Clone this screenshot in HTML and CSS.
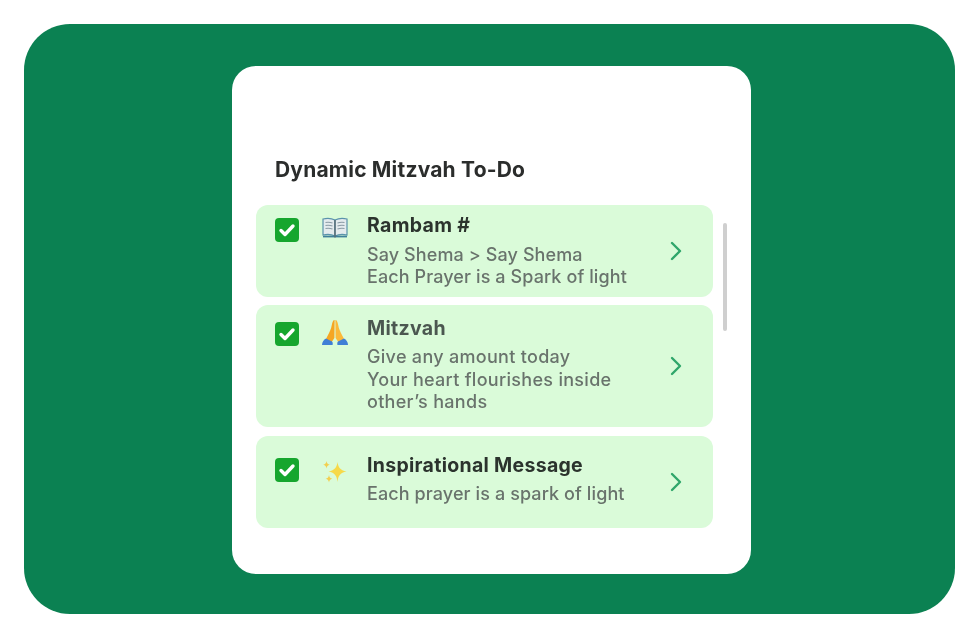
FILE: index.html
```html
<!DOCTYPE html>
<html lang="en">
<head>
    <meta charset="UTF-8">
    <title>Dynamic Mitzvah To-Do</title>
    <link rel="stylesheet" href="styles.css">
</head>
<body>

<div class="panel">
    <div class="card">
        <h1 class="title">Dynamic Mitzvah To-Do</h1>

        <div class="todo-list">
            <!-- Rambam -->
            <div class="todo-item item-rambam">
                <span class="check"><svg viewBox="0 0 24 24" width="24" height="24"><path d="M6 12.500l4 4 8-8.500" fill="none" stroke="#fff" stroke-width="3.400" stroke-linecap="round" stroke-linejoin="round"/></svg></span>
                <span class="emoji">
                    <svg viewBox="0 0 26 22" width="26" height="22">
                        <path d="M1 2c4-1 8-1 12 1v16c-4-2-8-2-12-1z" fill="#e4ebee" stroke="#5a93ab" stroke-width="1.200"/>
                        <path d="M25 2c-4-1-8-1-12 1v16c4-2 8-2 12-1z" fill="#e4ebee" stroke="#5a93ab" stroke-width="1.200"/>
                        <path d="M3.500 5.500c2.500-.4 5-.2 7 .6M3.500 8.500c2.500-.4 5-.2 7 .6M3.500 11.500c2.500-.4 5-.2 7 .6M22.500 5.500c-2.500-.4-5-.2-7 .6M22.500 8.500c-2.500-.4-5-.2-7 .6M22.500 11.500c-2.500-.4-5-.2-7 .6" fill="none" stroke="#8a9ba5" stroke-width="1.100"/>
                        <path d="M1 19.500h24" stroke="#3f7f9b" stroke-width="1.800"/>
                        <path d="M13 3v17.500" stroke="#5b6a73" stroke-width="1.400"/>
                    </svg>
                </span>
                <div class="todo-text">
                    <h2 class="todo-name">Rambam #</h2>
                    <p class="todo-desc">Say Shema &gt; Say Shema<br>Each Prayer is a Spark of light</p>
                </div>
                <svg class="chevron" viewBox="0 0 12 20" width="12" height="20"><path d="M2 2l8 8-8 8" fill="none" stroke="#2fa66a" stroke-width="2.400" stroke-linecap="round" stroke-linejoin="round"/></svg>
            </div>

            <!-- Mitzvah -->
            <div class="todo-item item-mitzvah">
                <span class="check"><svg viewBox="0 0 24 24" width="24" height="24"><path d="M6 12.500l4 4 8-8.500" fill="none" stroke="#fff" stroke-width="3.400" stroke-linecap="round" stroke-linejoin="round"/></svg></span>
                <span class="emoji">
                    <svg viewBox="0 0 28 28" width="28" height="28">
                        <path d="M13.600 1c-1.600 0-2.200 2-2.800 5-.6 3.500-2 7-4.300 11l-2 4 5.500 3 3.400-5z" fill="#f5a623"/>
                        <path d="M14.400 1c1.600 0 2.200 2 2.800 5 .6 3.500 2 7 4.300 11l2 4-5.500 3-3.400-5z" fill="#fbb93a"/>
                        <path d="M1 26c0-3 2-5.500 4-6.500l6 3c.7.600 1 2 .5 3.500z" fill="#3f7fd6"/>
                        <path d="M27 26c0-3-2-5.500-4-6.500l-6 3c-.7.600-1 2-.5 3.500z" fill="#3f7fd6"/>
                    </svg>
                </span>
                <div class="todo-text">
                    <h2 class="todo-name name-soft">Mitzvah</h2>
                    <p class="todo-desc desc-wide">Give any amount today<br>Your heart flourishes inside<br>other’s hands</p>
                </div>
                <svg class="chevron" viewBox="0 0 12 20" width="12" height="20"><path d="M2 2l8 8-8 8" fill="none" stroke="#2fa66a" stroke-width="2.400" stroke-linecap="round" stroke-linejoin="round"/></svg>
            </div>

            <!-- Inspirational -->
            <div class="todo-item item-message">
                <span class="check"><svg viewBox="0 0 24 24" width="24" height="24"><path d="M6 12.500l4 4 8-8.500" fill="none" stroke="#fff" stroke-width="3.400" stroke-linecap="round" stroke-linejoin="round"/></svg></span>
                <span class="emoji">
                    <svg viewBox="0 0 26 26" width="26" height="26">
                        <path d="M15.500 3c.8 5.500 2.500 8 9 9.500-6.500 1.500-8.200 4-9 10.500-.8-6.500-2.500-9-9-10.500 6.500-1.500 8.200-4 9-9.500z" fill="#f6d94a"/>
                        <path d="M4.500 2c.4 2.400 1.100 3.100 3.300 3.700-2.200.6-2.900 1.300-3.300 3.700-.4-2.400-1.100-3.100-3.300-3.700 2.200-.6 2.900-1.300 3.300-3.700z" fill="#f2cf4e"/>
                        <path d="M7 16c.4 2.400 1.100 3.100 3.300 3.700-2.200.6-2.900 1.300-3.300 3.700-.4-2.400-1.100-3.100-3.300-3.700 2.200-.6 2.900-1.300 3.300-3.700z" fill="#f2cf4e"/>
                    </svg>
                </span>
                <div class="todo-text">
                    <h2 class="todo-name">Inspirational Message</h2>
                    <p class="todo-desc">Each prayer is a spark of light</p>
                </div>
                <svg class="chevron" viewBox="0 0 12 20" width="12" height="20"><path d="M2 2l8 8-8 8" fill="none" stroke="#2fa66a" stroke-width="2.400" stroke-linecap="round" stroke-linejoin="round"/></svg>
            </div>
        </div>

        <div class="scrollbar"></div>
    </div>
</div>

</body>
</html>
```

FILE: styles.css
```css
body {
    font-family: Inter, "Liberation Sans", sans-serif;
    margin: 0;
    background-color: #fff;
}

.panel {
    box-sizing: border-box;
    width: 931px;
    height: 590px;
    margin: 24px 0 0 24px;
    padding: 42px 204px 40px 208px;
    background-color: #0b8152;
    border-radius: 46px;
}

.card {
    position: relative;
    box-sizing: border-box;
    height: 508px;
    padding: 91px 38px 0 24px;
    background-color: #fff;
    border-radius: 24px;
}

.title {
    margin: 0 0 22px 19px;
    font-size: 21px;
    line-height: 26px;
    font-weight: 700;
    letter-spacing: 0.2px;
    color: #2b2d2c;
    filter: blur(0.4px);
}

.todo-list {
    display: flex;
    flex-direction: column;
    gap: 8px;
}

.todo-item {
    display: flex;
    align-items: flex-start;
    box-sizing: border-box;
    padding: 0 31px 0 19px;
    background-color: #dafbd9;
    border-radius: 12px;
}

.item-rambam {
    height: 92px;
}

.item-mitzvah {
    height: 122px;
    margin-bottom: 1px;
}

.item-message {
    height: 92px;
}

.check {
    flex: none;
    width: 24px;
    height: 24px;
    margin-top: 13px;
    background-color: #16a62e;
    border-radius: 4px;
}

.check svg {
    display: block;
}

.item-mitzvah .check {
    margin-top: 17px;
}

.item-message .check {
    margin-top: 22px;
}

.emoji {
    flex: none;
    width: 27px;
    margin-top: 12px;
    margin-left: 23px;
    margin-right: 18px;
}

.emoji svg {
    display: block;
}

.item-mitzvah .emoji {
    margin-top: 14px;
    margin-left: 22px;
    margin-right: 19px;
}

.item-message .emoji {
    margin-top: 23px;
}

.todo-text {
    flex: 1;
    margin-top: 8px;
    filter: blur(0.4px);
}

.item-mitzvah .todo-text {
    margin-top: 11px;
}

.item-message .todo-text {
    margin-top: 17px;
}

.todo-name {
    margin: 0 0 7px;
    font-size: 19.500px;
    line-height: 24px;
    font-weight: 700;
    letter-spacing: 0.3px;
    color: #2b332d;
}

.item-mitzvah .todo-name,
.item-message .todo-name {
    margin-bottom: 6px;
}

.name-soft {
    color: #4b5750;
}

.todo-desc {
    margin: 0;
    font-size: 18px;
    line-height: 22px;
    font-weight: 500;
    letter-spacing: 0.1px;
    color: #69736c;
}

.desc-wide {
    line-height: 22.500px;
    letter-spacing: 0.3px;
}

.chevron {
    flex: none;
    align-self: center;
}

.scrollbar {
    position: absolute;
    top: 157px;
    left: 491px;
    width: 4px;
    height: 108px;
    background-color: #cfcfcf;
    border-radius: 2px;
}
```
